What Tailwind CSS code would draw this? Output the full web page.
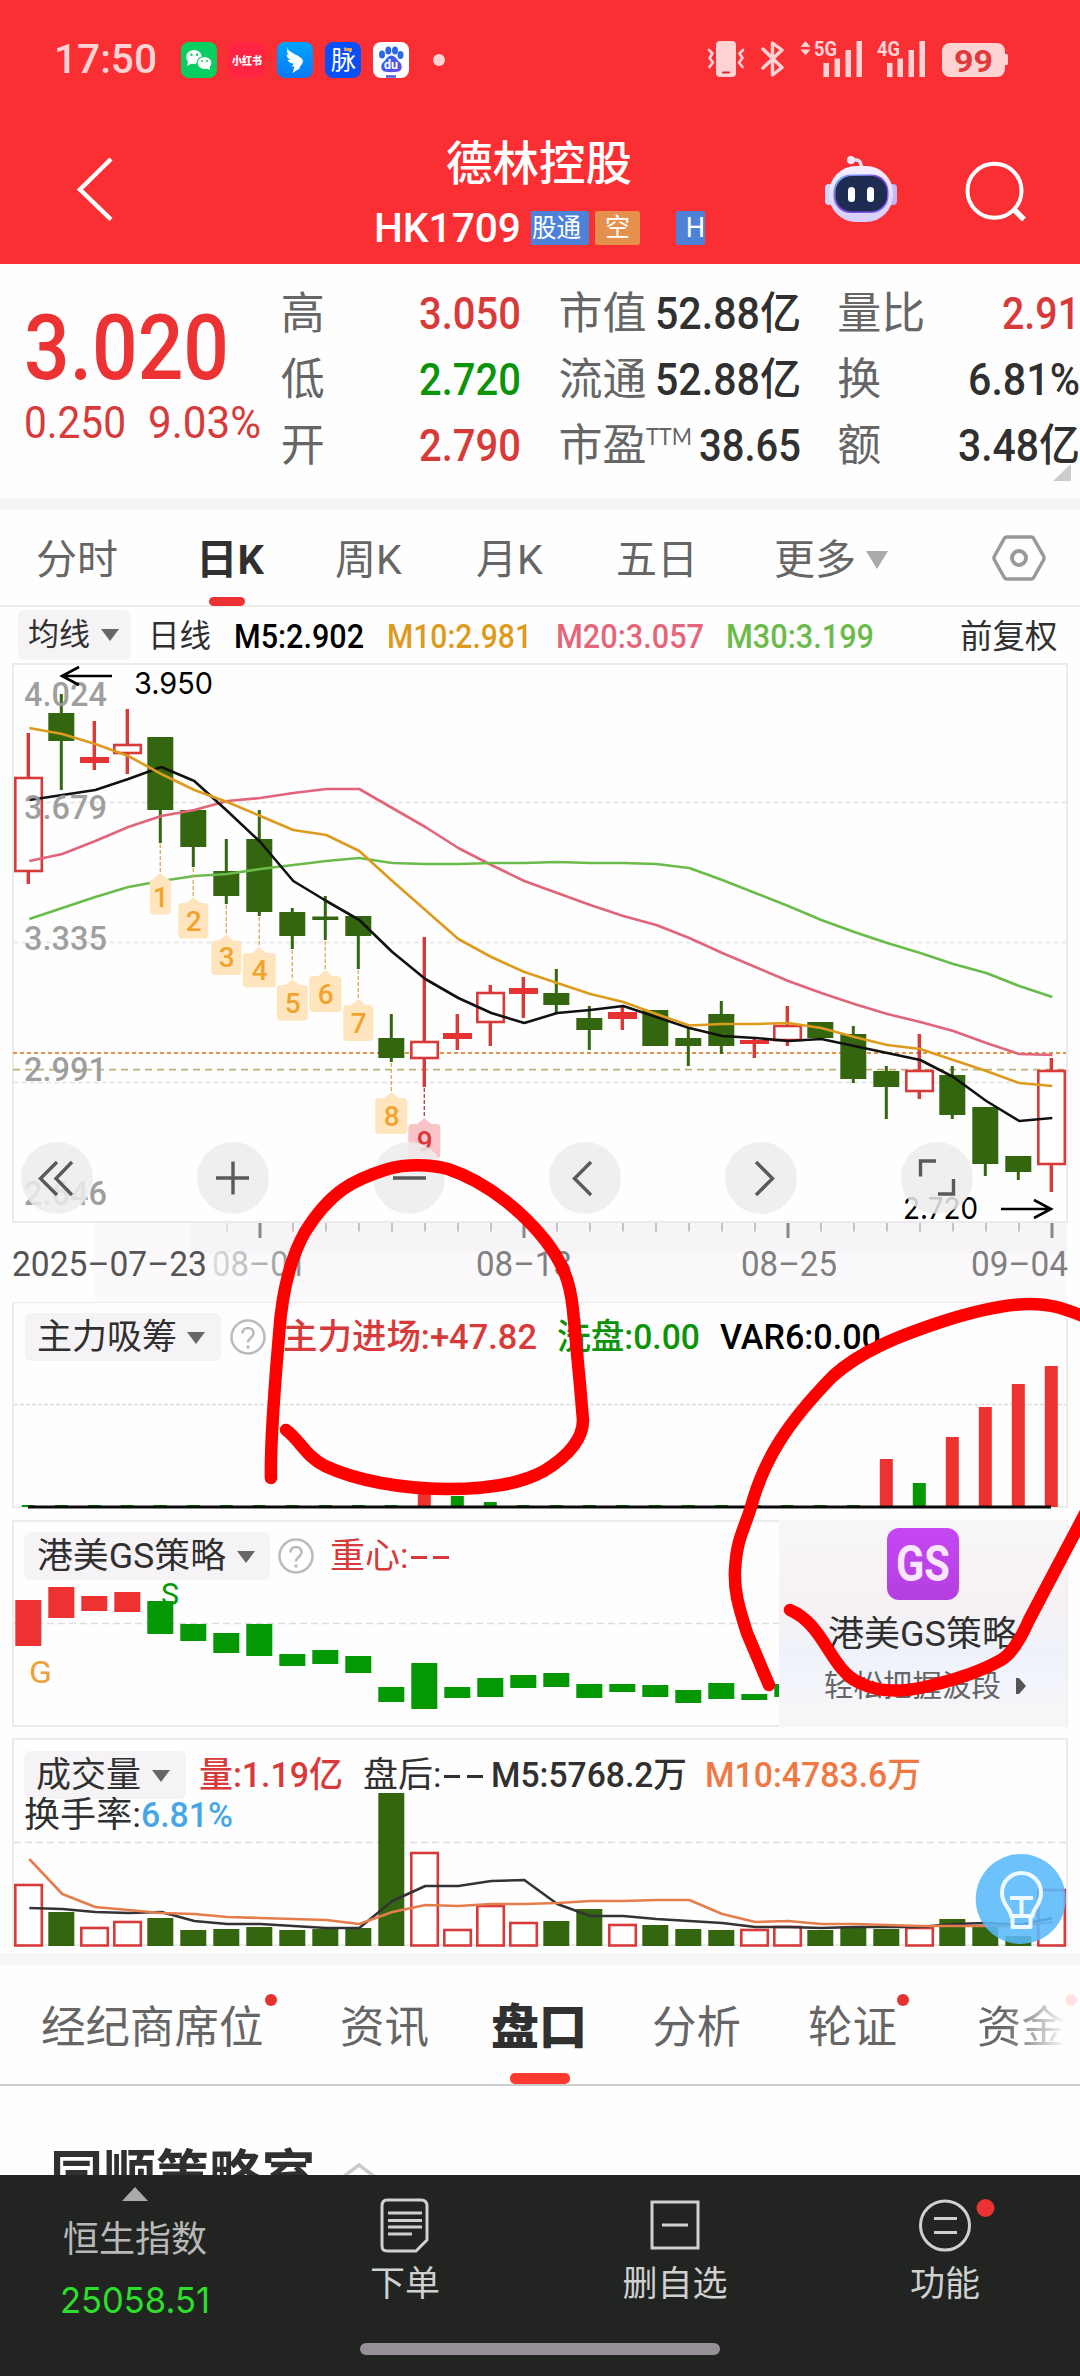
<!DOCTYPE html>
<html lang="zh-CN">
<head>
<meta charset="utf-8">
<title>德林控股 HK1709</title>
<script src="https://cdn.jsdelivr.net/npm/@tailwindcss/browser@4"></script>
</head>
<body class="bg-white">
<div class="relative flex h-[2376px] w-[1080px] flex-col overflow-hidden bg-[#fefefe] font-[Roboto,'Noto_Sans_CJK_SC',sans-serif] whitespace-nowrap text-[#303030]">

  <!-- status bar + title -->
  <header class="h-[264px] shrink-0 bg-[#f92f34] text-white">
    <div class="flex h-[120px] items-center pl-[54px]">
      <span data-fit="103" class="text-[40px] leading-none font-medium text-[#ffd3d4]">17:50</span>
      <svg class="ml-6 h-9 w-[268px]" viewBox="181 42 268 36">
        <defs>
          <linearGradient id="sky" x1="0" y1="0" x2="0" y2="1"><stop offset="0" stop-color="#00a6ff"/><stop offset="1" stop-color="#0a78f5"/></linearGradient>
          <linearGradient id="paw" x1="0" y1="0" x2="1" y2="1"><stop offset="0" stop-color="#2468f0"/><stop offset="1" stop-color="#6a4be0"/></linearGradient>
        </defs>
        <rect x="181" y="42" width="36" height="36" rx="8" fill="#07cf62"/>
        <ellipse cx="194" cy="57" rx="7.8" ry="7" fill="#fff"/><path d="M188 61l-1 5 6-3z" fill="#fff"/>
        <ellipse cx="204.500" cy="63" rx="7.500" ry="6.500" fill="#fff" stroke="#07cf62" stroke-width="1.200"/><path d="M206 68l4 2-.5-4z" fill="#fff"/>
        <g fill="#07cf62"><circle cx="191.500" cy="54.800" r="1.200"/><circle cx="197" cy="54.800" r="1.200"/><circle cx="202" cy="61" r="1"/><circle cx="207" cy="61" r="1"/></g>
        <rect x="229" y="42" width="36" height="36" rx="8" fill="#ff2442"/>
        <text x="232" y="65" font-size="11" font-weight="900" fill="#fff" textLength="30" lengthAdjust="spacingAndGlyphs">小红书</text>
        <rect x="277" y="42" width="36" height="36" rx="8" fill="url(#sky)"/>
        <path d="M286.500 48C290 53 297 54 301 58c3 2.500 2 4 1 6l-3 4h1.500l-8 5 2-6.500h-3c1-1 2-2 2-3-2 0-5-1-6-4 1 .5 2 .6 3 .5-2-1-4-3-4-6 1 .8 2 1.200 2.500 1.200-2-2-2.500-4-1.500-7.200z" fill="#fff"/>
        <rect x="325" y="42" width="36" height="36" rx="8" fill="#0a4ef5"/>
        <text x="331" y="69" font-size="25" fill="#fff">脉</text><rect x="344" y="48" width="8" height="3" fill="#d9a060"/>
        <rect x="373" y="42" width="36" height="36" rx="8" fill="#fff"/>
        <g fill="#2a68e8"><ellipse cx="382" cy="54.500" rx="3" ry="4"/><ellipse cx="388.300" cy="50.500" rx="3" ry="4"/><ellipse cx="395" cy="50.500" rx="3" ry="4"/><ellipse cx="400.500" cy="55" rx="3" ry="4"/></g>
        <path d="M391.500 55.500c4 0 5 4 8 6.500 3 2.500 3.500 9-2 9.800-4 .5-8 .5-12 0-5.500-.8-5-7.300-2-9.800 3-2.500 4-6.500 8-6.500z" fill="url(#paw)"/>
        <text x="384" y="69" font-size="12" font-weight="700" fill="#fff" textLength="14" lengthAdjust="spacingAndGlyphs">du</text>
        <path d="M386 76.500h10" stroke="#4d5be8" stroke-width="2.500"/>
        <circle cx="439" cy="60" r="6" fill="#ffd3d4"/>
      </svg>
      <svg class="ml-[257px] h-[40px] w-[304px]" viewBox="706 40 304 40" fill="#ffd3d4">
        <rect x="716" y="41" width="20" height="36" rx="4"/><rect x="722" y="71.500" width="8" height="2" rx="1" fill="#d8282c"/>
        <g fill="none" stroke="#ffd3d4" stroke-width="2.700" stroke-linejoin="round" stroke-linecap="round"><path d="M709 50l3.500 3.500-3 4.500 3.500 4.500-3.500 4.500M743 50l-3.500 3.500 3 4.500-3.500 4.500 3.500 4.500"/></g>
        <path d="M763 49l19 18.500-9.500 7.500V43l9.500 7-19 18" fill="none" stroke="#ffd3d4" stroke-width="3.400" stroke-linejoin="round" stroke-linecap="round"/>
        <path d="M805.500 41l5 6h-10zM805.500 55.500l5-6h-10z"/>
        <text x="814" y="55.500" font-size="20" font-weight="700" textLength="23" lengthAdjust="spacingAndGlyphs">5G</text>
        <rect x="823.500" y="63" width="5.500" height="14"/><rect x="834.500" y="58.500" width="5.500" height="18.500"/><rect x="845.500" y="50" width="5.500" height="27"/><rect x="856.500" y="41" width="5.500" height="36"/>
        <text x="877" y="55.500" font-size="20" font-weight="700" textLength="23" lengthAdjust="spacingAndGlyphs">4G</text>
        <rect x="887" y="63" width="5.500" height="14"/><rect x="897.500" y="58.500" width="5.500" height="18.500"/><rect x="908.500" y="50" width="5.500" height="27"/><rect x="919.500" y="41" width="5.500" height="36"/>
        <rect x="942" y="43" width="63" height="34" rx="8"/><path d="M1004 54h2.500a1.500 1.500 0 0 1 1.500 1.500v8a1.500 1.500 0 0 1-1.500 1.500H1004z"/>
        <text x="954" y="71.500" font-size="31" font-weight="700" fill="#e03a3c" textLength="39" lengthAdjust="spacingAndGlyphs">99</text>
      </svg>
    </div>
    <div class="flex h-[144px]">
      <svg class="ml-[70px] mt-[32px] h-[74px] w-[50px]" viewBox="70 152 50 74"><path d="M111 159L80 189.500l31 30" fill="none" stroke="#fff" stroke-width="4.500"/></svg>
      <div class="ml-[254px] flex w-[335px] flex-col">
        <div class="ml-[72px] mt-[17px] text-[46.5px] leading-[54px] font-medium">德林控股</div>
        <div class="mt-[10px] flex h-[54px] items-center text-[27px]">
          <span data-fit="147" class="text-[41px] leading-none font-medium">HK1709</span>
          <span class="ml-[10px] flex h-[34px] w-[58px] items-center overflow-hidden rounded-r-[3px] bg-[#4e82d9] pl-px"><span data-fit="49" class="leading-[34px] text-[26px]">股通</span></span>
          <span class="ml-[6px] flex h-[34px] w-[45px] items-center justify-center rounded-[3px] bg-[#e5904c] leading-[34px] text-[25px]">空</span>
          <span class="ml-[36px] flex h-[34px] w-[29px] items-center justify-end overflow-hidden rounded-l-[3px] bg-[#4e82d9] leading-[34px]">H</span>
        </div>
      </div>
      <svg class="ml-[111px] mt-[30px] h-[84px] w-[230px]" viewBox="820 150 230 84">
        <defs><linearGradient id="bot" x1="0" y1="0" x2="0" y2="1"><stop offset="0" stop-color="#f6f0ff"/><stop offset="1" stop-color="#d6cdfa"/></linearGradient>
        <linearGradient id="visor" x1="0" y1="0" x2="1" y2="1"><stop offset="0" stop-color="#6fc6f5"/><stop offset=".5" stop-color="#7a3fe0"/><stop offset="1" stop-color="#7f6bff"/></linearGradient></defs>
        <path d="M852 160c7-1 9 1 9.500 8" fill="none" stroke="#eadcf5" stroke-width="3.500"/><circle cx="851" cy="160" r="4" fill="#f3e8fa"/>
        <rect x="825" y="184" width="8" height="21" rx="4" fill="#d9d2fa"/><rect x="889" y="184" width="8" height="21" rx="4" fill="#c4b8f7"/>
        <rect x="829" y="166" width="64" height="56" rx="27" fill="url(#bot)"/>
        <rect x="833.500" y="174.500" width="55" height="38.500" rx="17" fill="url(#visor)"/><rect x="835.500" y="176" width="51.500" height="35.500" rx="16" fill="#1f2c52"/>
        <rect x="848" y="187" width="7" height="15" rx="3.500" fill="#fff"/><rect x="867" y="187" width="7" height="15" rx="3.500" fill="#fff"/>
        <circle cx="994.500" cy="190.700" r="27" fill="none" stroke="#fff" stroke-width="4"/><path d="M1014 209.500l10 10" stroke="#fff" stroke-width="5.500"/>
      </svg>
    </div>
  </header>

  <!-- quote -->
  <section class="flex h-[234px] shrink-0 text-[44px] leading-[66px]">
    <div class="ml-[24px] w-[257px] pt-[31px] text-[#d83a3a]">
      <div class="h-[106px] text-[90px] leading-[108px] font-medium text-[#ec3232]"><span data-fit="205">3.020</span></div>
      <div class="flex gap-[22px] leading-[44px]"><span data-fit="102">0.250</span><span data-fit="113">9.03%</span></div>
    </div>
    <div class="grid w-[241px] grid-cols-[1fr_auto] content-start pt-[17px] text-[#666]">
      <span>高</span><span data-fit="102" class="font-medium text-[#d83a3a]">3.050</span>
      <span>低</span><span data-fit="102" class="font-medium text-[#0b930b]">2.720</span>
      <span>开</span><span data-fit="102" class="font-medium text-[#d83a3a]">2.790</span>
    </div>
    <div class="ml-[37px] w-[243px] pt-[17px] text-[#666]">
      <div class="flex h-[66px] justify-between"><span>市值</span><span data-fit="146" class="font-medium text-[#303030]">52.88亿</span></div>
      <div class="flex h-[66px] justify-between"><span>流通</span><span data-fit="146" class="font-medium text-[#303030]">52.88亿</span></div>
      <div class="flex h-[66px] justify-between"><span class="flex">市盈<span data-fit="46" class="-mt-[10px] h-[40px] font-[Lato] text-[23px]">TTM</span></span><span data-fit="102" class="font-medium text-[#303030]">38.65</span></div>
    </div>
    <div class="relative ml-[36px] w-[243px] pt-[17px] text-[#666]">
      <div class="flex h-[66px] justify-between"><span>量比</span><span data-fit="78" class="font-medium text-[#d83a3a]">2.91</span></div>
      <div class="flex h-[66px] justify-between"><span>换</span><span data-fit="112" class="font-medium text-[#303030]">6.81%</span></div>
      <div class="flex h-[66px] justify-between"><span>额</span><span data-fit="122" class="font-medium text-[#303030]">3.48亿</span></div>
      <svg class="absolute right-[9px] top-[200px] h-[17px] w-[18px]" viewBox="0 0 18 17"><path d="M18 0v17H0z" fill="#ccc"/></svg>
    </div>
  </section>
  <div class="h-3 shrink-0 bg-[#f6f6f6]"></div>

  <!-- period tabs -->
  <nav class="flex h-[97px] shrink-0 items-start border-b-2 border-[#ededed] pt-[20px] text-[41px] leading-[60px] text-[#666]">
    <span class="ml-[36px] w-[160px]">分时</span>
    <span class="flex h-[76px] w-[139px] flex-col font-bold text-[#303030]"><span data-fit="68">日K</span><i class="mt-auto ml-[13px] h-[9px] w-9 rounded-full bg-[#ec3232]"></i></span>
    <span class="w-[141px]">周K</span>
    <span class="w-[140px]">月K</span>
    <span class="w-[158px]">五日</span>
    <span class="flex w-[217px] items-center">更多<svg class="ml-[10px] h-[18px] w-[22px]" viewBox="0 0 22 18"><path d="M0 0h22L11 18z" fill="#aaa"/></svg></span>
    <svg class="mt-[2px] h-[52px] w-[56px]" viewBox="992 532 56 52" fill="none" stroke="#999"><path d="M1008 537h24q2 0 3 2l9.500 17q1 2 0 4l-9.500 17q-1 2-3 2h-24q-2 0-3-2l-9.500-17q-1-2 0-4l9.500-17q1-2 3-2z" stroke-width="3.500"/><circle cx="1020" cy="558" r="7" stroke-width="4"/></svg>
  </nav>

  <!-- moving averages legend -->
  <div class="flex h-[55px] shrink-0 items-start pt-[3px] pl-[18px] text-[33px] leading-[54px] font-medium">
    <span class="flex h-[50px] w-[113px] shrink-0 items-center rounded-md bg-[#f6f3f7] pl-[10px] font-normal text-[31px]">均线<svg class="ml-[11px] h-3 w-[18px]" viewBox="0 0 18 12"><path d="M0 0h18L9 12z" fill="#666"/></svg></span>
    <span class="ml-[17px] font-normal text-[31.500px]">日线</span>
    <span data-fit="130" class="ml-[23px] text-black">M5:2.902</span>
    <span data-fit="145" class="ml-[23px] text-[#dd9a1d]">M10:2.981</span>
    <span data-fit="148" class="ml-[24px] text-[#e5667a]">M20:3.057</span>
    <span data-fit="148" class="ml-[22px] text-[#6bbb4b]">M30:3.199</span>
    <span class="ml-[86px] font-normal text-[32.500px]">前复权</span>
  </div>

  <!-- K line chart with axis -->
  <svg id="kline" class="h-[640px] w-[1080px] shrink-0" viewBox="0 662 1080 640"></svg>

  <!-- indicator: main-force accumulation -->
  <section class="grid h-[218px] shrink-0">
    <svg id="force" class="h-[218px] w-[1080px] [grid-area:1/1]" viewBox="0 1302 1080 218"></svg>
    <div class="mt-[11px] flex h-[48px] items-center pl-[25px] text-[35px] leading-[46px] font-medium [grid-area:1/1]">
      <span class="flex h-[48px] w-[196px] items-center rounded-md bg-[#f6f3f7] pt-[2px] pl-[12px] font-normal">主力吸筹<svg class="ml-[10px] h-3 w-[18px]" viewBox="0 0 18 12"><path d="M0 0h18L9 12z" fill="#666"/></svg></span>
      <svg class="ml-[8px] h-[38px] w-[38px]" viewBox="0 0 38 38"><circle cx="19" cy="19" r="16.500" fill="none" stroke="#bbb" stroke-width="2.500"/><path d="M13.500 15.500c0-7.500 11-7.500 11 0 0 4-5.500 4.500-5.500 9" fill="none" stroke="#bbb" stroke-width="2.500"/><circle cx="19" cy="29" r="1.700" fill="#bbb"/></svg>
      <span data-fit="254" class="ml-[16px] pt-[2px] text-[#d83a3a]">主力进场:+47.82</span>
      <span data-fit="143" class="ml-[20px] pt-[2px] text-[#0b930b]">洗盘:0.00</span>
      <span data-fit="161" class="ml-[20px] pt-[2px] text-black">VAR6:0.00</span>
    </div>
  </section>

  <!-- indicator: GS strategy -->
  <section class="grid h-[218px] shrink-0">
    <svg id="gs" class="h-[218px] w-[1080px] [grid-area:1/1]" viewBox="0 1520 1080 218"></svg>
    <div class="mt-[12px] flex h-[48px] items-center pl-[24px] text-[35px] leading-[46px] [grid-area:1/1]">
      <span class="flex h-[48px] w-[246px] items-center rounded-md bg-[#f6f3f7] pt-[2px] pl-[13px]"><span data-fit="189">港美GS策略</span><svg class="ml-[11px] h-3 w-[18px]" viewBox="0 0 18 12"><path d="M0 0h18L9 12z" fill="#666"/></svg></span>
      <svg class="ml-[7px] h-[38px] w-[38px]" viewBox="0 0 38 38"><circle cx="19" cy="19" r="16.500" fill="none" stroke="#bbb" stroke-width="2.500"/><path d="M13.500 15.500c0-7.500 11-7.500 11 0 0 4-5.500 4.500-5.500 9" fill="none" stroke="#bbb" stroke-width="2.500"/><circle cx="19" cy="29" r="1.700" fill="#bbb"/></svg>
      <span class="ml-[15px] flex items-center pt-[2px] text-[#d83a3a]">重心:<i class="ml-[3px] h-[3px] w-[16px] bg-[#d83a3a]"></i><i class="ml-[6px] h-[3px] w-[16px] bg-[#d83a3a]"></i></span>
    </div>
    <div class="ml-[779px] flex h-[207px] w-[288px] flex-col items-center bg-[linear-gradient(180deg,#f7f7f8_0%,#f8f1f4_38%,#eef2f8_62%,#f4f5fc_82%,#f6f6f7_90%)] [grid-area:1/1]">
      <div class="mt-[8px] flex h-[72px] w-[72px] items-center justify-center rounded-xl bg-linear-to-b from-[#c646f4] to-[#b33fdf] text-[50px] font-bold text-[#fbe6ff]"><span data-fit="54">GS</span></div>
      <div class="mt-[10px] text-[35px] leading-[50px]"><span data-fit="190">港美GS策略</span></div>
      <div class="mr-[-4px] mt-[3px] flex items-center text-[29.500px] leading-[46px] text-[#666]">轻松把握波段<svg class="ml-[15px] h-4 w-[10px]" viewBox="0 0 10 16"><path d="M0 0h3l7 8-7 8H0z" fill="#555"/></svg></div>
    </div>
  </section>

  <!-- volume -->
  <section class="grid h-[215px] shrink-0">
    <svg id="vol" class="h-[215px] w-[1080px] [grid-area:1/1]" viewBox="0 1738 1080 215"></svg>
    <div class="flex flex-col pt-[13px] pl-[24px] text-[35px] leading-[46px] [grid-area:1/1]">
      <div class="flex h-[48px] items-center">
        <span class="flex h-[48px] w-[162px] items-center rounded-md bg-[#f6f3f7] pt-[2px] pl-[12px]">成交量<svg class="ml-[11px] h-3 w-[18px]" viewBox="0 0 18 12"><path d="M0 0h18L9 12z" fill="#666"/></svg></span>
        <span data-fit="144" class="ml-[13px] pt-[2px] font-medium text-[#d83a3a]">量:1.19亿</span>
        <span class="ml-[20px] flex w-[128px] items-center pt-[2px]">盘后:<i class="ml-[3px] h-[3px] w-[16px] bg-[#303030]"></i><i class="ml-[7px] h-[3px] w-[16px] bg-[#303030]"></i></span>
        <span data-fit="196" class="pt-[2px] font-medium">M5:5768.2万</span>
        <span data-fit="216" class="ml-[18px] pt-[2px] font-medium text-[#ef7844]">M10:4783.6万</span>
      </div>
      <div class="mt-[-6px] flex"><span data-fit="117">换手率:</span><span data-fit="92" class="font-medium text-[#47a7e6]">6.81%</span></div>
    </div>
  </section>
  <div class="h-3 shrink-0 bg-[#f6f6f6]"></div>

  <!-- section tabs -->
  <nav class="flex h-[121px] shrink-0 border-b-2 border-[#ccc] text-[44.500px] leading-[126px] text-[#666]">
    <span class="relative ml-[41px] w-[299px] shrink-0">经纪商席位<i class="absolute top-[29px] left-[224px] size-3 rounded-full bg-[#e53131]"></i></span>
    <span class="w-[151px] shrink-0">资讯</span>
    <span class="flex w-[161px] shrink-0 flex-col text-[48px] font-black text-[#303030]"><span class="h-[108px]">盘口</span><i class="ml-[19px] h-3 w-[60px] rounded-[5px] bg-[#ff3a30]"></i></span>
    <span class="w-[156px] shrink-0">分析</span>
    <span class="relative w-[169px] shrink-0">轮证<i class="absolute top-[29px] left-[89px] size-3 rounded-full bg-[#e53131]"></i></span>
    <span class="relative shrink-0 bg-linear-to-r from-[#666] from-30% to-white bg-clip-text text-transparent">资金<i class="absolute top-[29px] left-[88px] size-3 rounded-full bg-[#ffe3e3]"></i></span>
  </nav>
  <div class="flex h-[89px] shrink-0 items-start overflow-hidden pl-[50px]">
    <span class="pt-[51px] text-[53px] leading-[78px] font-bold">同顺策略室</span>
    <svg class="mt-[74px] ml-[25px] h-5 w-[40px]" viewBox="0 0 40 20"><path d="M3 17L19 5l16 12" fill="none" stroke="#ccc" stroke-width="3.500"/></svg>
  </div>

  <!-- bottom bar -->
  <footer class="h-[201px] shrink-0 bg-[#212421] text-[35px] text-[#d0d0d0]">
    <div class="grid h-[160px] grid-cols-4">
      <div class="flex flex-col items-center text-[#b8b8b8]"><svg class="mt-[12px] h-[14px] w-[26px]" viewBox="0 0 26 14"><path d="M13 0l13 14H0z" fill="#aaa"/></svg>
        <span class="mt-[15px] text-[36px] leading-[48px]">恒生指数</span><span data-fit="150" class="mt-[12px] font-[Inter] text-[36px] leading-[48px] text-[#2bdf2b]">25058.51</span></div>
      <div class="flex flex-col items-center"><svg class="mt-[20px] h-[60px] w-[60px]" viewBox="375 2195 60 60" fill="none" stroke="#d0d0d0" stroke-width="3"><path d="M387 2200h34q6 0 6 6v34l-11 11h-29q-5 0-5-5v-40q0-6 5-6z"/><path d="M388 2213h34M388 2220.500h34M388 2227h34M388 2234h24"/></svg><span class="mt-[6px] leading-[48px]">下单</span></div>
      <div class="flex flex-col items-center"><svg class="mt-[20px] h-[60px] w-[60px]" viewBox="644 2195 60 60" fill="none" stroke="#d0d0d0" stroke-width="3"><path d="M651 2202h46v46h-46zM661 2225h26"/></svg><span class="mt-[6px] leading-[48px]">删自选</span></div>
      <div class="flex flex-col items-center"><svg class="mt-[20px] h-[60px] w-[100px]" viewBox="894 2195 100 60" fill="none" stroke="#d0d0d0" stroke-width="3"><circle cx="944" cy="2225.500" r="24.500"/><path d="M933 2218.500h23M933 2232.500h23"/><circle cx="984.500" cy="2208" r="9" fill="#ec3232" stroke="none"/></svg><span class="mt-[6px] leading-[48px]">功能</span></div>
    </div>
    <div class="mx-auto mt-[8px] h-3 w-[360px] rounded-full bg-[#959196]"></div>
  </footer>

  <!-- floating hint button -->
  <svg class="absolute top-[1854px] left-[975px] h-[91px] w-[91px]" viewBox="975 1854 91 91" fill="none" stroke="#eef8ff" stroke-width="4" stroke-linejoin="round"><circle cx="1020.700" cy="1899" r="45" fill="#58b9fc" fill-opacity=".87" stroke="none"/><path d="M1011 1916c0-8-9-10-9-23.500a19.500 19.500 0 0 1 39 0c0 13.500-8.500 15.500-8.500 23.500zM1012.500 1916v11h18v-11M1010 1898h23M1021.500 1898v18"/></svg>

  <!-- freehand marks -->
  <svg class="absolute inset-0 h-[2376px] w-[1080px]" viewBox="0 0 1080 2376" fill="none" stroke="#ff0000" stroke-width="12.500" stroke-linecap="round" stroke-linejoin="round">
    <path d="M271 1478C270 1440 276 1370 279 1335C282 1290 292 1255 305 1232C330 1192 352 1180 388 1169C405 1164 430 1164 448 1169C490 1183 525 1215 545 1240C562 1262 570 1280 573 1310L580 1385L583 1420C583 1438 570 1455 544 1471C520 1484 490 1489 448 1489C400 1489 355 1480 325 1466C305 1456 300 1440 286 1430"/>
    <path d="M769 1685L747 1633C738 1605 734 1590 735 1570C737 1535 745 1530 753 1500C765 1460 785 1425 833 1376C860 1352 895 1337 944 1321C985 1308 1010 1304 1030 1304C1055 1304 1066 1310 1086 1317M1088 1508L1029 1620Q1015 1652 1001 1660C980 1672 950 1681 929 1686C905 1692 880 1693 860 1683C830 1670 825 1625 790 1610"/>
  </svg>
</div>

<script>
  // Condensed labels: set the text to the advance width given in data-fit.
  document.querySelectorAll('[data-fit]').forEach(function (el) {
    var w = el.dataset.fit;
    el.innerHTML = '<svg width="' + w + '" height="1" style="display:inline-block;vertical-align:baseline;overflow:visible;max-width:none"><text y="1" fill="currentColor" textLength="' + w + '" lengthAdjust="spacingAndGlyphs">' + el.textContent + '</text></svg>';
  });

  var RED = '#d83a3a', BRIGHT = '#ee3232', GREEN = '#33660f', LIME = '#049804';
  function X(i) { return 28.3 + 33 * i; }
  function rect(x, y, w, h, f, extra) { return '<rect x="' + x + '" y="' + y + '" width="' + w + '" height="' + h + '" fill="' + f + '" ' + (extra || '') + '/>'; }
  function line(x1, y1, x2, y2, c, w, d) { return '<path d="M' + x1 + ' ' + y1 + 'L' + x2 + ' ' + y2 + '" stroke="' + c + '" stroke-width="' + w + '"' + (d ? ' stroke-dasharray="' + d + '"' : '') + '/>'; }
  function curve(a, c) { return '<polyline fill="none" stroke="' + c + '" stroke-width="2.6" stroke-linejoin="round" points="' + a.map(function (y, i) { return (X(i) + 1) + ',' + y; }).join(' ') + '"/>'; }
  function txt(x, y, s, size, c, w, extra) { return '<text x="' + x + '" y="' + y + '" font-size="' + size + '" fill="' + c + '" textLength="' + w + '" lengthAdjust="spacingAndGlyphs" ' + (extra || '') + '>' + s + '</text>'; }
  function frame(t, b) { return rect(13, t, 1054, b - t, 'none', 'stroke="#ebebeb" stroke-width="2"'); }
  function hollow(i, t, b) { return rect(X(i) - 13, t + 1, 26.5, Math.max(b - t - 2, 1), '#fff', 'stroke="' + RED + '" stroke-width="2.6"'); }

  // [up, high, bodyTop, bodyBottom, low]
  var K = [[1,733,777,872,884],[0,694,713,741,790],[2,721,757,763,770],[1,709,744,754,774],[0,737,737,810,843],[0,810,810,847,867],[0,839,871,896,904],[0,810,839,912,916],[0,908,912,936,949],[0,896,916.5,920,940],[0,916,916,936,969],[0,1014,1038,1058,1062],[1,937,1041,1059,1087],[2,1014,1033,1039,1050],[1,985,992,1023,1046],[2,977,988,994,1018],[0,969,993,1005,1013],[0,1006,1018,1030,1050],[2,1006,1012,1019,1030],[0,1010,1010,1046,1046],[0,1027,1038,1046,1066],[0,1001,1014,1046,1054],[2,1038,1040,1044,1058],[1,1006,1025,1041,1046],[0,1022,1022,1038,1038],[0,1026,1034,1079,1083],[0,1066,1071,1087,1119],[1,1034,1070,1092,1099],[0,1066,1075,1115,1119],[0,1107,1107,1164,1176],[0,1156,1156,1172,1180],[1,1058,1070,1165,1192]];
  var s = rect(95, 1223, 972, 79, '#fcf9fd') + rect(191, 1223, 876, 30, '#f6f4f7');
  s += frame(664, 1222);
  [802.6, 942.6, 1082.6].forEach(function (y) { s += line(14, y, 1066, y, '#e9e9e9', 2, '5 3'); });
  s += line(13, 1053, 1066, 1053, '#e0914a', 2, '4 3') + line(13, 1069.6, 1066, 1069.6, '#bdb27c', 1.8, '7 5');
  K.forEach(function (k, i) {
    var x = X(i), c = k[0] ? RED : GREEN;
    s += line(x, k[1], x, k[4], c, k[0] ? 3.4 : 3);
    if (k[0] == 1) s += hollow(i, k[2], k[3]);
    else if (k[0] == 2) s += rect(x - 14.3, k[2], 29, k[3] - k[2], '#e53232');
    else s += rect(x - 13, k[2], 26, k[3] - k[2], c);
  });
  s += curve([861,854,841,827,816,810,801,798,793,789,789,808,827,848,865,881,893,905,916,925,938,953,967,981,993,1004,1014,1022,1031,1043,1054,1055], '#e2647a');
  s += curve([919,908,897,887,881,876,874,869,865,861,858,863,864,864,863,863,862,863,863,864,868,880,893,906,920,932,943,953,964,973,986,997], '#6bbb4b');
  s += curve([800,795,790,779,767,781,811,842,881,901,920,952,979,998,1013,1023,1013,1010,1006,1017,1028,1036,1038,1041,1039,1046,1053,1060,1077,1101,1121,1118], '#111');
  s += curve([728,734,744,756,774,790,802,816,830,835,851,881,910,939,957,972,983,994,1002,1014,1025.5,1024,1024,1023,1028,1037,1045,1049,1060,1071,1083,1086], '#dd9a1d');
  [['4.024',705.5],['3.679',819],['3.335',950],['2.991',1081],['2.646',1205]].forEach(function (l) { s += txt(24, l[1], l[0], 33, '#999', 83, 'font-weight="500" fill-opacity=".95"'); });
  s += txt(134, 694, '3.950', 30, '#000', 79, 'font-family="Inter"');
  s += '<path d="M112 676H62M79 667L62 676l17 9" fill="none" stroke="#000" stroke-width="2.6"/>';
  // countdown tags: [index, width, apex, bottom]
  [[4,21,873,914.5],[5,30,897,938.6],[6,30,934.5,975],[7,33,947,987.5],[8,31,979,1020.6],[9,32,970,1012],[10,30,999,1041],[11,32,1092,1134],[12,32,1118,1158.6]].forEach(function (b, n) {
    var x = X(b[0]), l = x - b[1] / 2, r = x + b[1] / 2, t = b[2] + 6, pink = n == 8;
    s += line(x, K[b[0]][4] + 1, x, b[2], pink ? '#b04848' : '#e0b060', 1.4, '4 2');
    s += '<path d="M' + (x - 7) + ' ' + t + 'L' + x + ' ' + b[2] + 'l7 6H' + (r - 4) + 'q4 0 4 4V' + (b[3] - 4) + 'q0 4-4 4H' + (l + 4) + 'q-4 0-4-4V' + (t + 4) + 'q0-4 4-4z" fill="' + (pink ? '#f8c4c7' : '#fee5bd') + '"/>';
    s += '<text x="' + (x + .5) + '" y="' + (b[3] - 8) + '" font-size="28" font-weight="500" text-anchor="middle" fill="' + (pink ? '#dd3438' : '#f2a32d') + '">' + (n + 1) + '</text>';
  });
  s += txt(903, 1219, '2.720', 30, '#000', 75, 'font-family="Inter"');
  s += '<path d="M1001 1209h50M1034 1200l17 9-17 9" fill="none" stroke="#000" stroke-width="2.6"/>';
  [57, 233, 409, 585, 761, 937].forEach(function (x) { s += '<circle cx="' + x + '" cy="1178" r="36" fill="#ececec" fill-opacity=".85"/>'; });
  s += '<g fill="none" stroke="#5a5a5a" stroke-width="3.4"><path d="M57 1162l-16.500 16.500 16.500 16.500M72 1162l-16 16.500 16 16.500M216 1178h33M233 1161.500v33M393 1178h33M591 1162l-16.500 16.500 16.500 16.500M756 1162l16.500 16.500-16.500 16.500M920.500 1176.500v-15.500h15.500M938 1194h15.500v-15"/></g>';
  for (var i = 6; i < 32; i++) { var M = (i - 7) % 8 == 0; s += line(X(i) + .7, 1223, X(i) + .7, M ? 1238 : 1231.500, M ? '#888' : i == 6 ? '#e0e0e0' : '#c4c4c4', M ? 3 : 2); }
  function date(x, t, c, w) { return txt(x, 1275.5, t.replace(/-/g, '–'), 35, c, w); }
  s += date(12, '2025-07-23', '#555', 195) + date(741, '08-25', '#808080', 96) + date(476, '08-13', '#808080', 96) + date(971, '09-04', '#808080', 97);
  s += '<defs><linearGradient id="fade"><stop offset="0" stop-color="#ddd"/><stop offset="1" stop-color="#8a8a8a"/></linearGradient></defs>' + date(212, '08-01', 'url(#fade)', 95);
  document.getElementById('kline').innerHTML = s;

  // main-force bars
  s = frame(1302, 1507) + line(14, 1404.5, 1066, 1404.5, '#ddd', 1.6, '4 2');
  for (i = 0; i < 26; i++) s += rect(X(i) - 6.5, 1505, 13, 2, LIME);
  [[12,1490,1],[13,1496,0],[14,1502,0],[26,1459,1],[27,1483,0],[28,1437,1],[29,1407,1],[30,1384,1],[31,1366,1]].forEach(function (b) { s += rect(X(b[0]) - 6.5, b[1], 13, 1507 - b[1], b[2] ? BRIGHT : LIME); });
  s += line(28, 1507, 1051, 1507, '#0a0a0a', 3);
  document.getElementById('force').innerHTML = s;

  // GS blocks
  s = frame(1521, 1726) + line(14, 1623.5, 1066, 1623.5, '#ddd', 1.4, '7 4');
  s += txt(161, 1605, 'S', 31, LIME, 18) + txt(29, 1683, 'G', 31, '#eca23a', 23);
  [[1600,1646],[1587,1618],[1596,1611],[1592,1612],[1601,1634],[1624,1641],[1633,1653],[1624,1656],[1654,1666],[1650,1664],[1656,1673],[1687,1702],[1663,1709],[1687,1698],[1678,1697],[1675,1688],[1673,1687],[1684,1698],[1684,1692],[1685,1697],[1690,1703],[1683,1699],[1694,1700],[1684,1697]].forEach(function (b, i) { s += rect(X(i) - 13, b[0], 26, b[1] - b[0], i < 4 ? BRIGHT : LIME); });
  document.getElementById('gs').innerHTML = s;

  // volume
  s = frame(1739, 1945) + line(14, 1842.500, 1066, 1842.500, '#ddd', 1.4, '7 4');
  [1884,1912,1927,1921,1918,1930,1929,1927,1930,1929,1928,1793,1852,1929,1905,1922,1921,1909,1924,1925,1929,1930,1929,1926,1930,1927,1929,1927,1919,1927,1936,1889].forEach(function (t, i) { s += K[i][0] ? hollow(i, t, 1946.5) : rect(X(i) - 13, t, 26, 1946 - t, GREEN); });
  s += curve([1908,1909,1912,1913,1912,1921,1924,1924,1926,1928,1928,1901,1886,1886,1881,1880,1904,1916,1916,1919,1921,1923,1927,1927,1928,1927,1927,1927,1924,1923,1925,1918], '#333');
  s += curve([1859,1894,1907,1910,1913,1914,1917,1918,1919,1920,1924,1912,1905,1906,1904,1904,1903,1901,1901,1900,1900,1914,1922,1921,1924,1924,1925,1926,1926,1926,1926,1922], '#e57c4c');
  document.getElementById('vol').innerHTML = s;
</script>
</body>
</html>
